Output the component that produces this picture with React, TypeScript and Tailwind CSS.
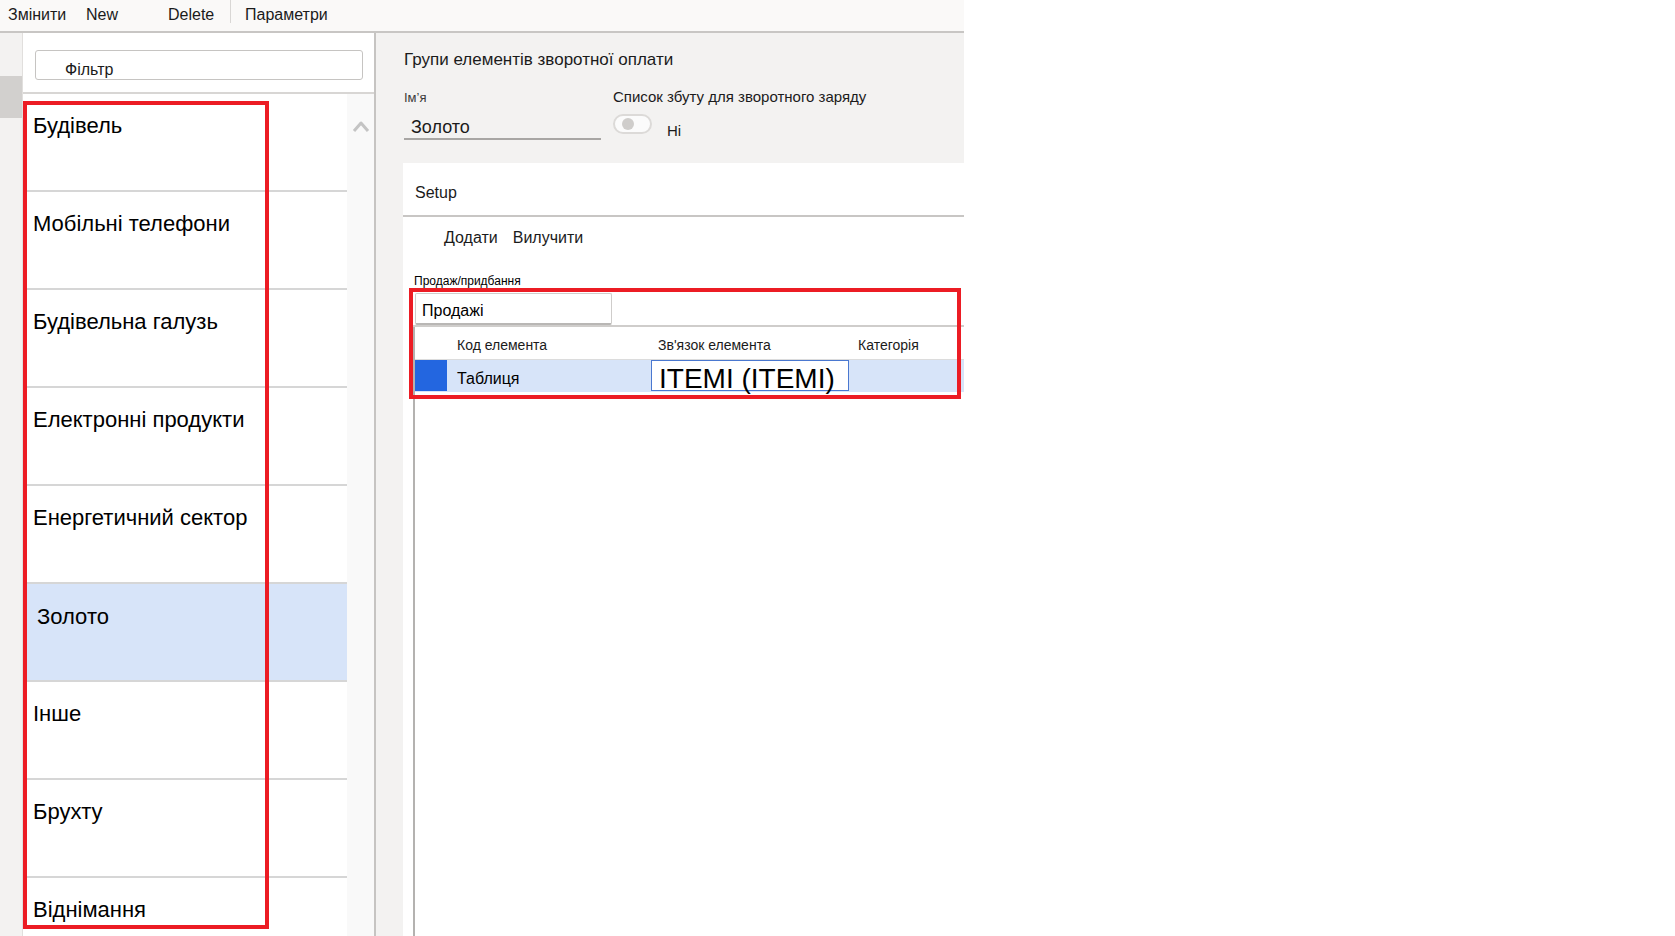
const groups = [
  "Будівель",
  "Мобільні телефони",
  "Будівельна галузь",
  "Електронні продукти",
  "Енергетичний сектор",
  "Золото",
  "Інше",
  "Брухту",
  "Віднімання",
];

const selectedGroup = "Золото";

const Toolbar = () => (
  <div className="flex h-[33px] w-[964px] items-start border-b-2 border-[#c8c6c4] bg-[#faf9f8] pt-[5px] pl-[8px] text-[16px] leading-[20px] text-[#1b1b1b]">
    <span className="w-[78px]">Змінити</span>
    <span className="w-[82px]">New</span>
    <span className="w-[62px]">Delete</span>
    <span className="-mt-[5px] h-[23px] w-px bg-[#d9d7d5]" />
    <span className="ml-[14px]">Параметри</span>
  </div>
);

const GroupList = () => (
  <div className="flex w-[354px] flex-col border-l border-r-2 border-l-[#e1dfdd] border-r-[#c6c4c2] bg-white">
    <div className="h-[61px] border-b-2 border-[#d8d6d4] pt-[17px] pl-[12px]">
      <div className="h-[30px] w-[328px] rounded-[3px] border border-[#c6c4c2] pt-[9px] pl-[29px] text-[16px] leading-[20px] text-[#1b1b1b]">
        Фільтр
      </div>
    </div>
    <div className="flex flex-1 overflow-hidden">
      <div className="w-[324px]">
        {groups.map((g) => {
          const active = g === selectedGroup;
          return (
            <div
              key={g}
              className={`h-[98px] border-b-2 border-[#d6d6d6] text-[22px] leading-[26px] text-black ${
                active ? "bg-[#d7e4f9] pt-[20px] pl-[14px]" : "pt-[19px] pl-[10px]"
              }`}
            >
              {g}
            </div>
          );
        })}
      </div>
      <div className="w-[27px] bg-[#f9f9f9] pt-[26px] pl-[5px]">
        <svg width="18" height="13" viewBox="0 0 18 13" fill="none">
          <polyline points="2,11 9,3 16,11" stroke="#c4c4c4" strokeWidth="3" strokeLinejoin="round" />
        </svg>
      </div>
    </div>
  </div>
);

const Header = () => (
  <div className="h-[130px] bg-[#f3f2f1] pl-[28px] text-[#1b1b1b]">
    <div className="pt-[17px] text-[17px] leading-[20px]">Групи елементів зворотної оплати</div>
    <div className="mt-[17px] flex items-baseline leading-[20px]">
      <span className="w-[209px] text-[13px] text-[#3b3a39]">Ім’я</span>
      <span className="text-[15px]">Список збуту для зворотного заряду</span>
    </div>
    <div className="mt-[6px] flex items-start">
      <div className="mt-[2px] h-[24px] w-[197px] border-b-2 border-[#a8a6a4] pl-[7px] text-[18px] leading-[22px]">
        Золото
      </div>
      <div className="ml-[12px] flex items-start">
        <div className="flex h-[20px] w-[39px] items-center rounded-full border-2 border-[#dcdad8] bg-[#fbfbfb] pl-[7px]">
          <div className="h-[12px] w-[12px] rounded-full bg-[#cfcdcb]" />
        </div>
        <span className="mt-[8px] ml-[15px] text-[15px] leading-[18px]">Ні</span>
      </div>
    </div>
  </div>
);

const LinesGrid = () => (
  <div className="ml-[10px] flex flex-1 flex-col">
    <div className="h-[34px] border-b-2 border-[#cfcdcb]">
      <div className="ml-[2px] h-[32px] w-[197px] rounded-[2px] border border-b-2 border-[#cfcdcb] border-b-[#b9b7b5] bg-white pt-[7px] pl-[6px] text-[16px] leading-[20px] text-black">
        Продажі
      </div>
    </div>
    <div className="flex-1 border-l-2 border-[#b4b2b0]">
      <div className="flex h-[33px] border-b border-[#dcdcdc] pt-[9px] text-[14px] leading-[18px] text-[#1b1b1b]">
        <span className="w-[32px]" />
        <span className="w-[204px] pl-[10px]">Код елемента</span>
        <span className="w-[200px] pl-[7px]">Зв'язок елемента</span>
        <span className="pl-[7px]">Категорія</span>
      </div>
      <div className="flex h-[32px] items-start bg-[#d7e4f9] text-black">
        <span className="h-[31px] w-[32px] bg-[#2366e0]" />
        <span className="w-[204px] pt-[9px] pl-[10px] text-[16px] leading-[20px]">Таблиця</span>
        <div className="h-[31px] w-[198px] overflow-visible border border-[#4a78d0] bg-white pl-[7px]">
          <div className="pt-[2px] text-[28px] leading-[31px] whitespace-nowrap">ITEMI (ITEMI)</div>
        </div>
      </div>
    </div>
  </div>
);

const SetupCard = () => (
  <div className="flex flex-1 flex-col bg-white text-[#1b1b1b]">
    <div className="h-[54px] border-b-2 border-[#c8c6c4] pt-[20px] pl-[12px] text-[16px] leading-[20px]">
      Setup
    </div>
    <div className="mt-[11px] flex pl-[41px] text-[16px] leading-[20px]">
      <span>Додати</span>
      <span className="ml-[15px]">Вилучити</span>
    </div>
    <div className="mt-[26px] pl-[11px] text-[12px] leading-[14px] text-black">Продаж/придбання</div>
    <div className="mt-[5px] flex flex-1">
      <LinesGrid />
    </div>
  </div>
);

export default function App() {
  return (
    <div className="relative h-[936px] w-[1675px] overflow-hidden bg-white font-['Liberation_Sans',Arial,sans-serif]">
      <Toolbar />
      <div className="flex h-[903px] w-[964px]">
        <div className="w-[22px] bg-[#f3f2f1] pt-[43px]">
          <div className="h-[42px] bg-[#d2d0ce]" />
        </div>
        <GroupList />
        <div className="flex flex-1 flex-col">
          <Header />
          <div className="flex flex-1">
            <div className="w-[27px] bg-[#f3f2f1]" />
            <SetupCard />
          </div>
        </div>
      </div>

      {/* annotation boxes */}
      <div className="pointer-events-none absolute left-[23px] top-[101px] h-[828px] w-[246px] border-4 border-[#ec1c24]" />
      <div className="pointer-events-none absolute left-[409px] top-[288px] h-[111px] w-[552px] border-4 border-[#ec1c24]" />
    </div>
  );
}
